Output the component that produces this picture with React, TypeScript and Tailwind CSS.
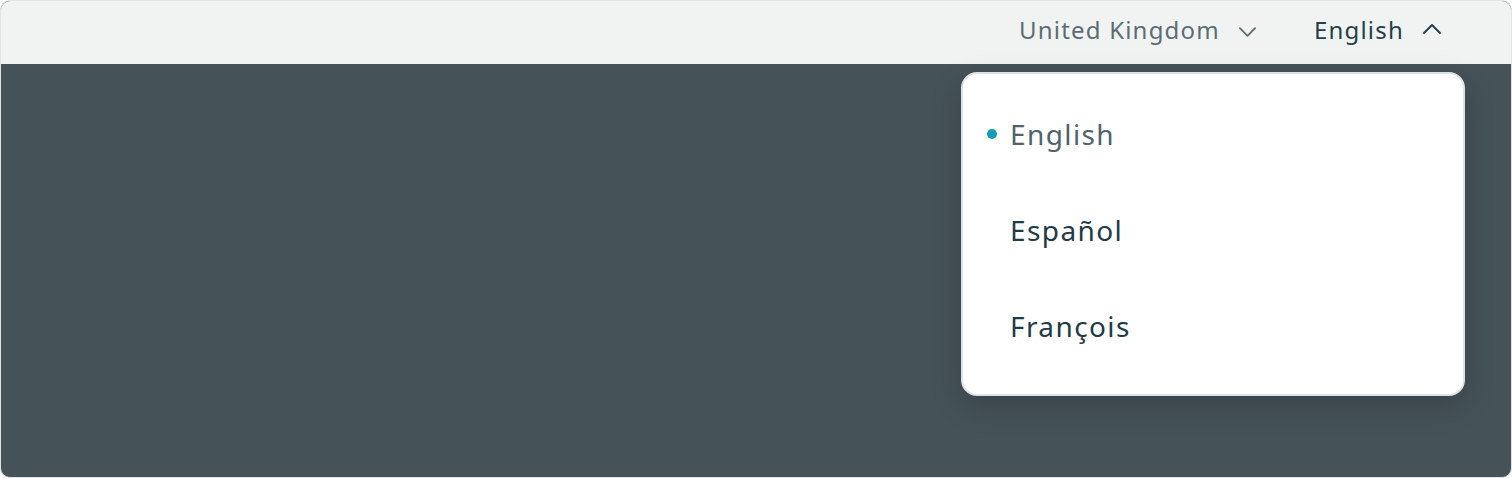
import React from "react";

function ChevronDown({ className }: { className?: string }) {
  return (
    <svg viewBox="0 0 20 12" className={className} fill="none" stroke="currentColor" strokeWidth="2" strokeLinecap="round" strokeLinejoin="round">
      <path d="M2 2l8 8 8-8" />
    </svg>
  );
}

function ChevronUp({ className }: { className?: string }) {
  return (
    <svg viewBox="0 0 20 12" className={className} fill="none" stroke="currentColor" strokeWidth="2" strokeLinecap="round" strokeLinejoin="round">
      <path d="M2 10l8-8 8 8" />
    </svg>
  );
}

export default function App() {
  const items = [
    { label: "English", active: true },
    { label: "Español", active: false },
    { label: "François", active: false },
  ];
  return (
    <div className="w-[1512px] h-[478px] bg-white" style={{ fontFamily: '"Noto Sans", sans-serif' }}>
      <div className="relative w-full h-full rounded-[10px] overflow-hidden border border-[#dfe3e3] bg-[#455258] flex flex-col">
        <header className="h-[63px] shrink-0 bg-[#f1f3f2] flex items-center justify-end pr-[69px] pb-[5px]">
          <div className="flex items-center text-[24px] tracking-[0.05em] text-[#5b6d74]">
            <span>United Kingdom</span>
            <ChevronDown className="w-[19px] h-[12px] ml-[18px] mt-[4px]" />
          </div>
          <div className="flex items-center text-[24px] tracking-[0.05em] text-[#233f4b] ml-[57px]">
            <span>English</span>
            <ChevronUp className="w-[20px] h-[12px] ml-[18px] -mt-[2px]" />
          </div>
        </header>
        <div className="flex-1" />
        <div className="absolute left-[960px] top-[71px] w-[504px] h-[324px] bg-white rounded-[16px] border-2 border-[#dde2e4] shadow-[0_10px_30px_rgba(0,0,0,0.18)] pt-[12px]">
          {items.map((it) => (
            <div key={it.label} className="h-[96px] flex items-center pl-[24px]">
              <span className={"w-[10px] h-[10px] rounded-full mr-[13px] " + (it.active ? "bg-[#0e9fb7]" : "bg-transparent")} />
              <span className={"text-[28px] tracking-[0.05em] " + (it.active ? "text-[#4e636b]" : "text-[#1f3b47]")}>{it.label}</span>
            </div>
          ))}
        </div>
      </div>
    </div>
  );
}
